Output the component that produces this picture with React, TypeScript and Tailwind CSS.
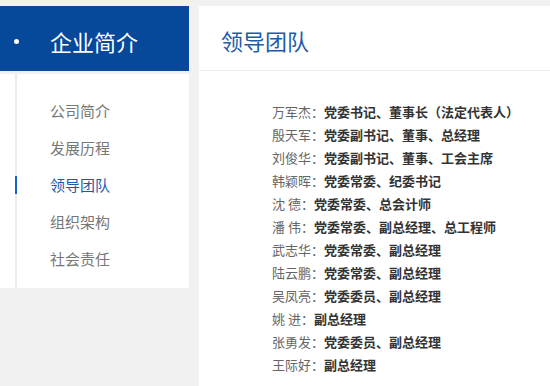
const menu = ["公司简介", "发展历程", "领导团队", "组织架构", "社会责任"];

const leaders: [string, string][] = [
  ["万军杰：", "党委书记、董事长（法定代表人）"],
  ["殷天军：", "党委副书记、董事、总经理"],
  ["刘俊华：", "党委副书记、董事、工会主席"],
  ["韩颖晖：", "党委常委、纪委书记"],
  ["沈 德：", "党委常委、总会计师"],
  ["潘 伟：", "党委常委、副总经理、总工程师"],
  ["武志华：", "党委常委、副总经理"],
  ["陆云鹏：", "党委常委、副总经理"],
  ["吴凤亮：", "党委委员、副总经理"],
  ["姚 进：", "副总经理"],
  ["张勇发：", "党委委员、副总经理"],
  ["王际好：", "副总经理"],
];

export default function App() {
  return (
    <div
      className="w-[550px] h-[386px] overflow-hidden bg-[#f1f1f1] pt-[6px] flex gap-[10px]"
      style={{ fontFamily: '"Noto Sans CJK SC", "Liberation Sans", sans-serif' }}
    >
      <aside className="w-[189px] shrink-0 flex flex-col">
        <div className="h-[65px] bg-[#06489a] flex items-center pt-[6px]">
          <span className="w-[5px] h-[5px] rounded-full bg-white ml-[14px]" />
          <span className="ml-[31px] text-[22px] text-white">企业简介</span>
        </div>
        <div className="mt-[3px] h-[214px] bg-white pl-[15px]">
          <div className="h-full border-l-2 border-[#ececec] pt-[19px]">
            {menu.map((m, i) => (
              <div key={m} className="relative h-[37px] flex items-center pl-[33px]">
                {i === 2 && (
                  <span className="absolute left-[-2px] top-[9px] w-[2px] h-[18px] bg-[#1764c8]" />
                )}
                <span
                  className={
                    i === 2 ? "text-[15px] text-[#1d5ba8]" : "text-[15px] text-[#777]"
                  }
                >
                  {m}
                </span>
              </div>
            ))}
          </div>
        </div>
      </aside>
      <main className="flex-1 bg-white min-w-[400px]">
        <div className="h-[65px] border-b border-[#eeeeee] flex items-center pl-[22px] pt-[4px]">
          <h1 className="text-[22px] text-[#1d5ba8]">领导团队</h1>
        </div>
        <div className="pl-[73px] pt-[29px] text-[13px] leading-[23px]">
          {leaders.map(([name, title]) => (
            <div key={name} className="whitespace-pre">
              <span className="text-[#666]">{name}</span>
              <span className="font-bold text-[#333]">{title}</span>
            </div>
          ))}
        </div>
      </main>
    </div>
  );
}
